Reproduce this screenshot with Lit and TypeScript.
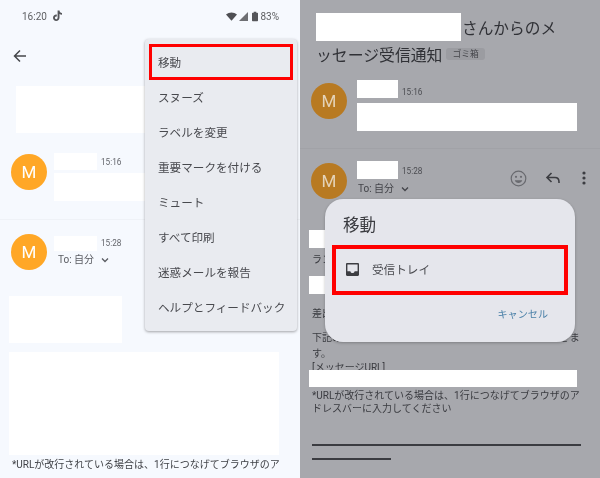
import { LitElement, html, css } from "lit";
import { customElement } from "lit/decorators.js";

const chevron = html`<svg class="chev" viewBox="0 0 10 10"><path d="M2 3.5 5 6.5 8 3.5" fill="none" stroke="currentColor" stroke-width="1.3"/></svg>`;

@customElement("app-root")
export class AppRoot extends LitElement {
  static styles = css`
    :host { display: block; width: 600px; height: 478px; overflow: hidden; }
    .screen {
      display: flex; width: 600px; height: 478px; filter: blur(0.5px);
      font-family: Roboto, "Noto Sans CJK JP", sans-serif; color: #44464b;
    }
    .panel { position: relative; width: 300px; height: 478px; overflow: hidden; flex: none; display: flex; flex-direction: column; }
    .left { background: #f6f9fe; }
    .right { background: #a7a8ad; color: #303136; }
    .mask { background: #fff; flex: none; }

    .status { height: 32px; flex: none; display: flex; align-items: center; padding: 0 21px 0 22px; font-size: 10px; color: #5f6063; }
    .status .tt { width: 11px; height: 12px; margin-left: 5px; }
    .status .sp { flex: 1; }
    .status .wifi { width: 11px; height: 9px; margin-right: 2px; }
    .status .sig { width: 9px; height: 9px; margin-right: 4px; }
    .status .bat { width: 6px; height: 11px; margin-right: 2px; }
    .toolbar { height: 48px; flex: none; display: flex; align-items: center; padding-left: 13px; }
    .toolbar svg { width: 14px; height: 14px; color: #45474b; }
    .subject-mask { width: 129px; height: 47px; margin: 6px 0 0 16px; }

    .msg { display: flex; flex: none; padding-left: 11px; }
    .avatar {
      width: 36px; height: 36px; border-radius: 50%; flex: none; background: #ffa726; color: #fff;
      display: flex; align-items: center; justify-content: center; font-size: 17px; margin-right: 7px;
    }
    .right .avatar { background: #b87a22; color: #e4d3b8; margin-right: 10px; }
    .body { display: flex; flex-direction: column; flex: none; }
    .head { display: flex; align-items: center; }
    .time { font-size: 8.2px; margin-left: 4px; color: #63656b; }
    .right .time { color: #4c4d52; }
    .to { height: 12px; line-height: 12px; font-size: 10px; display: flex; align-items: center; padding-left: 4px; color: #5a5c62; white-space: pre; }
    .right .to { color: #43444a; padding-left: 1px; }
    .chev { width: 10px; height: 10px; margin-left: 3px; }
    .divider { height: 1px; flex: none; background: #eff2f7; }
    .right .divider { background: #a1a2a7; }

    .l1 { margin-top: 20px; }
    .l1 .avatar { margin-top: 1px; }
    .l1 .name { width: 43px; height: 17px; }
    .l1 .preview { width: 91px; height: 28px; margin-top: 3px; }
    .l-div { margin-top: 18px; }
    .l2 { margin-top: 14px; }
    .l2 .name { width: 43px; height: 15px; margin-top: 2px; }
    .l2 .to { margin-top: 3px; }
    .l-m1 { width: 113px; height: 47px; margin: 26px 0 0 9px; }
    .l-m2 { width: 270px; height: 103px; margin: 9px 0 0 9px; }
    .line { font-size: 10px; line-height: 13px; height: 13px; white-space: nowrap; padding-left: 12px; flex: none; color: #3a3b40; }
    .left .line { margin-top: 3px; color: #3f4146; }

    .menu {
      position: absolute; left: 145px; top: 39px; width: 152px; height: 292px; background: #e9ebf0; border-radius: 4px;
      box-shadow: 0 1px 3px rgba(0,0,0,.35); padding-top: 5px; box-sizing: border-box; display: flex; flex-direction: column;
    }
    .item { height: 35px; flex: none; display: flex; align-items: center; padding-left: 13px; font-size: 11.6px; color: #48494e; white-space: nowrap; }
    .hl { position: absolute; box-sizing: border-box; border: 3px solid #f00; pointer-events: none; }
    .menu .hl { left: 4px; top: 5px; width: 144px; height: 36px; }

    .title1 { display: flex; align-items: center; height: 28px; margin: 13px 0 0 16px; font-size: 15.7px; white-space: nowrap; flex: none; }
    .title1 .mask { width: 145px; height: 28px; margin-right: 1px; }
    .title2 { display: flex; align-items: center; height: 26px; margin-left: 16px; font-size: 15.85px; white-space: nowrap; flex: none; }
    .chip { margin-left: 4px; height: 12px; line-height: 12px; padding: 0 6px; border-radius: 3px; font-size: 8.8px; background: #9b9ca1; color: #46474c; }
    .r1 { margin-top: 13px; }
    .r1 .avatar { margin-top: 3px; }
    .r1 .name { width: 41px; height: 18px; }
    .r1 .time { margin-top: 6px; }
    .r1 .preview { width: 220px; height: 28px; margin-top: 5px; }
    .r-div { margin-top: 17px; }
    .r2 { margin-top: 12px; height: 38px; width: 300px; box-sizing: border-box; }
    .r2 .avatar { margin-top: 2px; }
    .r2 .name { width: 41px; height: 18px; }
    .r2 .time { margin-top: 2px; }
    .r2 .to { margin-top: 4px; }
    .actions { display: flex; align-items: center; margin-left: auto; height: 34px; padding-right: 13px; color: #3c3d42; }
    .actions svg { flex: none; }
    .smile { width: 17px; height: 17px; color: #696a6f; }
    .reply { width: 16px; height: 16px; margin-left: 18px; }
    .dots { width: 6px; height: 14px; margin-left: 20px; }

    .rm { width: 16px; height: 18px; margin-left: 9px; }
    .rm-a { margin-top: 31px; }
    .rm-b { margin-top: 10px; }
    .rm-c { width: 268px; height: 17px; margin: 0 0 0 9px; }
    .mt-la { margin-top: 5px; }
    .mt-sa { margin-top: 13px; }
    .mt-ka { margin-top: 11px; }
    .mt-su { margin-top: 3px; }
    .mt-ur { margin-top: 1px; height: 9px; line-height: 13px; overflow: visible; }
    .mt-u2 { margin-top: 2px; }
    .rule { height: 1.5px; background: #3b3c41; flex: none; margin-left: 12px; }
    .rule1 { width: 269px; margin-top: 29px; }
    .rule2 { width: 79px; margin-top: 12.5px; }

    .dialog {
      position: absolute; left: 25px; top: 199px; width: 250px; height: 143px; border-radius: 18px; background: #e5e6ec;
      box-shadow: 0 1px 3px rgba(0,0,0,.25); display: flex; flex-direction: column; color: #3d3e43;
    }
    .d-title { font-size: 16.6px; line-height: 20px; margin: 17px 0 0 18px; color: #3b3c41; }
    .d-row { display: flex; align-items: center; height: 50px; margin-top: 8px; padding-left: 20px; font-size: 11.6px; color: #4a4b50; }
    .d-row svg { width: 15px; height: 15px; margin-right: 12px; color: #3c3d42; }
    .dialog .hl { left: 7px; top: 46px; width: 236px; height: 50px; border-width: 4px; }
    .d-act { font-size: 10.1px; color: #4a80a8; text-align: right; margin: 11px 27px 0 0; line-height: 20px; }
  `;

  private menuItems = ["移動", "スヌーズ", "ラベルを変更", "重要マークを付ける", "ミュート", "すべて印刷", "迷惑メールを報告", "ヘルプとフィードバック"];

  render() {
    return html`
      <div class="screen">
        <section class="panel left">
          <div class="status">
            <span>16:20</span>
            <svg class="tt" viewBox="0 0 11 12"><path d="M5.6.5h1.9c.1 1.4 1 2.3 2.5 2.4v1.9c-.9 0-1.800-.3-2.500-.8v3.600c0 2-1.500 3.400-3.300 3.400C2.400 11 1 9.600 1 7.800c0-2 1.800-3.500 3.800-3.200v2c-1-.3-1.900.4-1.900 1.200 0 .8.600 1.400 1.300 1.400.8 0 1.400-.6 1.400-1.500z" fill="#55565a"/></svg>
            <span class="sp"></span>
            <svg class="wifi" viewBox="0 0 12 9"><path d="M0 2.400C3.500-.8 8.500-.8 12 2.400L6 9z" fill="#4e4f53"/></svg>
            <svg class="sig" viewBox="0 0 9 9"><path d="M9 0v9H0z" fill="#6e6f73"/></svg>
            <svg class="bat" viewBox="0 0 7 11"><path d="M2 0h3v1h1.200c.4 0 .8.300.8.700V10.300c0 .4-.4.700-.8.700H.8c-.4 0-.8-.3-.8-.7V1.700C0 1.300.4 1 .8 1H2z" fill="#55565a"/></svg>
            <span>83%</span>
          </div>
          <div class="toolbar">
            <svg viewBox="0 0 14 14"><path d="M13 7H2M7 1.500 1.500 7 7 12.500" fill="none" stroke="currentColor" stroke-width="1.500"/></svg>
          </div>
          <div class="mask subject-mask"></div>
          <div class="msg l1">
            <div class="avatar">M</div>
            <div class="body">
              <div class="head"><div class="mask name"></div><span class="time">15:16</span></div>
              <div class="mask preview"></div>
            </div>
          </div>
          <div class="divider l-div"></div>
          <div class="msg l2">
            <div class="avatar">M</div>
            <div class="body">
              <div class="head"><div class="mask name"></div><span class="time">15:28</span></div>
              <div class="to">To: 自分 ${chevron}</div>
            </div>
          </div>
          <div class="mask l-m1"></div>
          <div class="mask l-m2"></div>
          <div class="line">*URLが改行されている場合は、1行につなげてブラウザのア</div>

          <div class="menu">
            ${this.menuItems.map((m) => html`<div class="item">${m}</div>`)}
            <div class="hl"></div>
          </div>
        </section>

        <section class="panel right">
          <div class="title1"><div class="mask"></div>さんからのメ</div>
          <div class="title2">ッセージ受信通知<span class="chip">ゴミ箱</span></div>
          <div class="msg r1">
            <div class="avatar">M</div>
            <div class="body">
              <div class="head"><div class="mask name"></div><span class="time">15:16</span></div>
              <div class="mask preview"></div>
            </div>
          </div>
          <div class="divider r-div"></div>
          <div class="msg r2">
            <div class="avatar">M</div>
            <div class="body">
              <div class="head"><div class="mask name"></div><span class="time">15:28</span></div>
              <div class="to">To: 自分 ${chevron}</div>
            </div>
            <div class="actions">
              <svg class="smile" viewBox="0 0 17 17">
                <circle cx="8.500" cy="8.500" r="7.300" fill="none" stroke="currentColor" stroke-width="1.200"/>
                <circle cx="6" cy="6.800" r="1.100" fill="currentColor"/><circle cx="11" cy="6.800" r="1.100" fill="currentColor"/>
                <path d="M4.800 10.200h7.400c-.5 1.700-2 2.800-3.700 2.800s-3.200-1.100-3.700-2.800z" fill="currentColor"/>
              </svg>
              <svg class="reply" viewBox="0 0 16 16"><path d="M6.500 3 2 7.500 6.500 12M2.500 7.500H10c2.500 0 4 1.700 4 4.500v1" fill="none" stroke="currentColor" stroke-width="1.600"/></svg>
              <svg class="dots" viewBox="0 0 6 14"><circle cx="3" cy="2" r="1.600" fill="currentColor"/><circle cx="3" cy="7" r="1.600" fill="currentColor"/><circle cx="3" cy="12" r="1.600" fill="currentColor"/></svg>
            </div>
          </div>
          <div class="mask rm rm-a"></div>
          <div class="line mt-la">ランダムに</div>
          <div class="mask rm rm-b"></div>
          <div class="line mt-sa">差出人</div>
          <div class="line mt-ka">下記のURLから、メッセージの内容を確認することができま</div>
          <div class="line mt-su">す。</div>
          <div class="line mt-ur">[メッセージURL]</div>
          <div class="mask rm-c"></div>
          <div class="line mt-u2">*URLが改行されている場合は、1行につなげてブラウザのア</div>
          <div class="line">ドレスバーに入力してください</div>
          <div class="rule rule1"></div>
          <div class="rule rule2"></div>

          <div class="dialog">
            <div class="d-title">移動</div>
            <div class="d-row">
              <svg viewBox="0 0 15 15"><path fill-rule="evenodd" d="M2.200 1h10.600C13.500 1 14 1.500 14 2.200v10.600c0 .7-.5 1.200-1.200 1.200H2.200C1.500 14 1 13.500 1 12.800V2.200C1 1.500 1.500 1 2.200 1zM2.400 2.400v6.800h3c0 1.100.9 1.900 2.100 1.900s2.100-.8 2.100-1.900h3V2.400z" fill="currentColor"/></svg>
              受信トレイ
            </div>
            <div class="d-act">キャンセル</div>
            <div class="hl"></div>
          </div>
        </section>
      </div>
    `;
  }
}
